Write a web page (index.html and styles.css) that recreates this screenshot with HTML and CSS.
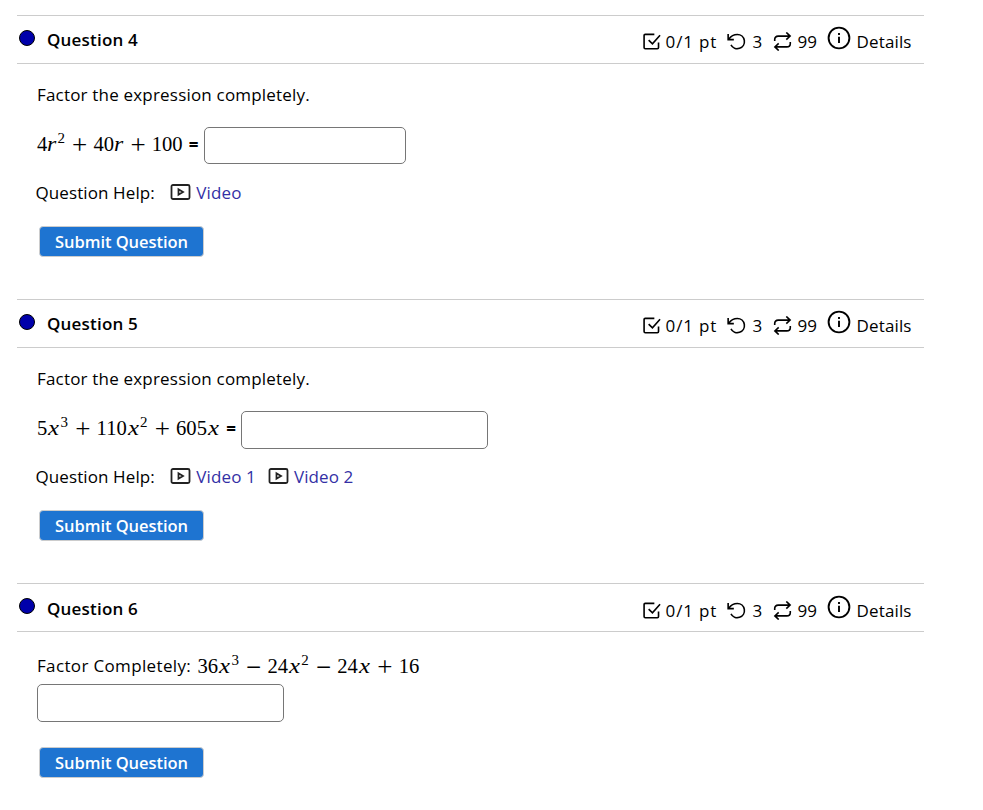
FILE: index.html
```html
<!DOCTYPE html>
<html lang="en">
<head>
<meta charset="utf-8">
<title>Factoring questions</title>
<link rel="stylesheet" href="styles.css">
</head>
<body>
<svg class="defs" aria-hidden="true">
  <symbol id="check" viewBox="0 0 20 20"><path d="M13 2.500H3.500q-1.300 0-1.300 1.300v12.600q0 1.300 1.300 1.300h12.600q1.300 0 1.300-1.300V11M7 8.500l4 4 8-9"/></symbol>
  <symbol id="undo" viewBox="0 0 20 20"><path d="M1.200 2v6h6M1.800 7.500C4 4.500 7 2.600 10.900 2.600a7.500 7.500 0 1 1-6.700 11"/></symbol>
  <symbol id="repeat" viewBox="0 0 20 20"><path d="M14 .5l4 3.800-4 3.800M17.500 4.300H5.500Q1.800 4.300 1.800 8v1.500M6 11.900l-4 3.800 4 3.800M2.500 15.700h12Q18.200 15.700 18.200 12v-1.500"/></symbol>
  <symbol id="info" viewBox="0 0 24 24"><circle cx="12" cy="12" r="10.400"/><path d="M12 10.700v6.300M12 7v2"/></symbol>
  <symbol id="video" viewBox="0 0 20 16"><rect x="1" y="1" width="18" height="14" rx="1.500"/><path d="M8 5.300v5.400l4.500-2.700z"/></symbol>
</svg>
<main>
  <section class="question">
    <header>
      <span class="dot"></span><h2>Question 4</h2>
      <div class="meta"><svg class="icon"><use href="#check"/></svg><span class="score">0/1 pt</span><svg class="icon"><use href="#undo"/></svg><span class="tries">3</span><svg class="icon"><use href="#repeat"/></svg><span class="versions">99</span><svg class="info"><use href="#info"/></svg><span class="details">Details</span></div>
    </header>
    <p class="prompt">Factor the expression completely.</p>
    <div class="answer">
      <span class="math"><span>4</span><i class="r">r</i><sup>2</sup><b>+</b><span>40</span><i class="r">r</i><b>+</b><span>100</span></span><span class="equals">=</span><input type="text" class="short" aria-label="Answer">
    </div>
    <div class="help"><span class="label">Question Help:</span><a><svg><use href="#video"/></svg><span>Video</span></a></div>
    <button>Submit Question</button>
  </section>
  <section class="question">
    <header>
      <span class="dot"></span><h2>Question 5</h2>
      <div class="meta"><svg class="icon"><use href="#check"/></svg><span class="score">0/1 pt</span><svg class="icon"><use href="#undo"/></svg><span class="tries">3</span><svg class="icon"><use href="#repeat"/></svg><span class="versions">99</span><svg class="info"><use href="#info"/></svg><span class="details">Details</span></div>
    </header>
    <p class="prompt">Factor the expression completely.</p>
    <div class="answer">
      <span class="math"><span>5</span><i class="x">x</i><sup>3</sup><b>+</b><span>110</span><i class="x">x</i><sup>2</sup><b>+</b><span>605</span><i class="x">x</i></span><span class="equals">=</span><input type="text" class="long" aria-label="Answer">
    </div>
    <div class="help"><span class="label">Question Help:</span><a><svg><use href="#video"/></svg><span>Video 1</span></a><a><svg><use href="#video"/></svg><span>Video 2</span></a></div>
    <button>Submit Question</button>
  </section>
  <section class="question stacked">
    <header>
      <span class="dot"></span><h2>Question 6</h2>
      <div class="meta"><svg class="icon"><use href="#check"/></svg><span class="score">0/1 pt</span><svg class="icon"><use href="#undo"/></svg><span class="tries">3</span><svg class="icon"><use href="#repeat"/></svg><span class="versions">99</span><svg class="info"><use href="#info"/></svg><span class="details">Details</span></div>
    </header>
    <div class="prompt inline"><span class="lead">Factor Completely:</span><span class="math"><span>36</span><i class="x">x</i><sup>3</sup><b>−</b><span>24</span><i class="x">x</i><sup>2</sup><b>−</b><span>24</span><i class="x">x</i><b>+</b><span>16</span></span></div>
    <input type="text" class="long" aria-label="Answer">
    <button>Submit Question</button>
  </section>
</main>
</body>
</html>
```
FILE: styles.css
```css
* { box-sizing: border-box; }
body { margin: 0; background: #fff; color: #000; font: 17px/24px "Trebuchet MS", "Open Sans", "Noto Sans", sans-serif; letter-spacing: .12px; }
main { width: 907px; margin: 15px 0 0 17px; }
.defs { display: none; }
svg { fill: none; stroke: #000; flex: none; }
.question { height: 284px; display: flex; flex-direction: column; align-items: flex-start; }
.question:last-child { height: 211px; }
header { width: 100%; height: 49px; border: solid #ccc; border-width: 1px 0; display: flex; align-items: center; flex: none; }
.dot { width: 16px; height: 16px; margin: 0 12px 3px 2px; border: 1.5px solid #000; border-radius: 50%; background: #00a; }
h2 { margin: 0; font-size: 17px; font-weight: 600; line-height: 24px; letter-spacing: .2px; }
.meta { display: flex; align-items: center; margin: 4px 0 0 auto; padding-right: 12px; white-space: nowrap; }
.icon { width: 19px; height: 19px; stroke-width: 1.7; margin-top: -1px; }
.info { width: 24px; height: 24px; stroke-width: 1.9; margin: -7px 6px 0 -1px; }
.score { width: 66px; padding-left: 5px; letter-spacing: .85px; }
.tries { width: 27px; padding-left: 7px; }
.versions { width: 36px; padding-left: 6px; letter-spacing: 0; }
.details { width: 55.4px; }
.prompt { height: 24px; margin: 19px 0 0 20px; white-space: nowrap; letter-spacing: .19px; }
.answer { display: flex; align-items: flex-start; height: 38px; margin: 20px 0 0 20px; }
input { height: 38px; margin: 0; border: 1px solid #767676; border-radius: 5px; background: #fff; }
.short { width: 202px; height: 37px; }
.long { width: 247px; }
.math { display: flex; align-items: baseline; font: 20.6px/24px "Liberation Serif", serif; letter-spacing: 0; margin-top: 5px; }
.math i { display: inline-block; transform-origin: 0 50%; }
.math .r { width: 10.2px; transform: scaleX(1.15); }
.math .x { width: 13.3px; transform: translateX(1px) scaleX(1.2); }
.math sup { width: 8.5px; font-size: 15px; line-height: 0; vertical-align: baseline; position: relative; top: -8px; }
.math b { width: 27.5px; text-align: center; font-size: 27px; line-height: 0; font-weight: 400; position: relative; top: 3px; }
.equals { font-weight: 700; width: 21px; padding-left: 6px; margin-top: 6px; }
.help { display: flex; height: 24px; margin: 16px 0 0 18.5px; }
.label { width: 134.8px; letter-spacing: .1px; }
.help a { display: flex; align-items: center; color: #3330a5; margin-right: 12px; }
.help svg { width: 21px; height: 16px; stroke: #222; stroke-width: 1.8; margin: -2px 5px 0 0; }
button { width: 165px; height: 31px; margin: 21px 0 0 22px; padding: 0; border: 1px solid #ccc; border-radius: 4px; background: #1e74d1; color: #fff; font: 600 16.5px/24px "Trebuchet MS", "Open Sans", "Noto Sans", sans-serif; letter-spacing: -.05px; white-space: nowrap; }
.inline { display: flex; align-items: center; margin-top: 23px; }
.inline .math { margin-top: -3px; }
.lead { width: 160.5px; letter-spacing: .35px; margin-top: -2px; }
.stacked header > h2, .stacked header > .meta { padding-top: 2px; }
.stacked input { margin: 5px 0 0 20px; }
.stacked button { margin-top: 25px; }
```
